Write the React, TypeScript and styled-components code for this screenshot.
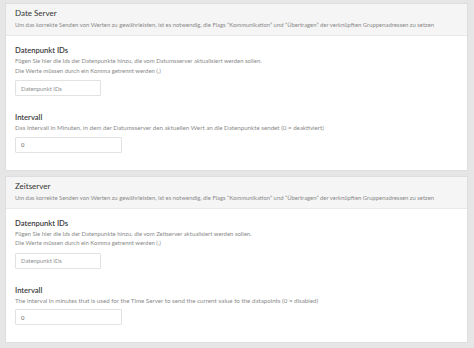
import styled, { createGlobalStyle } from "styled-components";

const GlobalStyle = createGlobalStyle`
    html, body {
        margin: 0;
        padding: 0;
        background-color: #e6e6e6;
        font-family: Lato, "Open Sans", sans-serif;
    }
`;

const Page = styled.div`
    padding: 3px 6px 4px 5px;
    display: flex;
    flex-direction: column;
    gap: 5px;
`;

const Card = styled.section`
    background-color: #ffffff;
    border: 1px solid #dedede;
`;

const CardHeader = styled.header`
    background-color: #f5f5f5;
    border-bottom: 1px solid #e9e9e9;
    padding: 5px 9px 6px;
`;

const Title = styled.h2`
    margin: 0 0 3px;
    font-size: 8px;
    line-height: 9px;
    font-weight: 400;
    color: #333333;
`;

const Subtitle = styled.p`
    margin: 0;
    font-size: 5.9px;
    line-height: 8px;
    color: #8a8a8a;
    white-space: nowrap;
`;

const CardBody = styled.div`
    padding: 9px 9px 17px;
    display: flex;
    flex-direction: column;
    gap: 16px;
`;

const Field = styled.div`
    display: flex;
    flex-direction: column;
    align-items: flex-start;
`;

const Label = styled.label`
    font-size: 7.6px;
    line-height: 10px;
    font-weight: 600;
    color: #3a3a3a;
    margin-bottom: 1px;
`;

const Help = styled.p<{ $size: number }>`
    margin: 0 0 4px;
    font-size: ${(props) => props.$size}px;
    line-height: 9.5px;
    color: #8a8a8a;
    white-space: nowrap;
`;

const Input = styled.input<{ $width: number }>`
    box-sizing: border-box;
    width: ${(props) => props.$width}px;
    height: 16px;
    margin-top: ${(props) => (props.$width > 100 ? 0 : 1)}px;
    padding: 0 5px;
    border: 1px solid #e2e2e2;
    border-radius: 1px;
    background: #ffffff;
    font-family: Lato, "Open Sans", sans-serif;
    font-size: 5.9px;
    color: #666666;
    outline: none;
    &::placeholder {
        color: #8f8f8f;
    }
`;

interface IServer {
    title: string;
    idsHelp: string;
    intervalHelp: string;
}

const servers: IServer[] = [
    {
        title: "Date Server",
        idsHelp: "Fügen Sie hier die Ids der Datenpunkte hinzu, die vom Datumsserver aktualisiert werden sollen.",
        intervalHelp: "Das Intervall in Minuten, in dem der Datumsserver den aktuellen Wert an die Datenpunkte sendet (0 = deaktiviert)",
    },
    {
        title: "Zeitserver",
        idsHelp: "Fügen Sie hier die Ids der Datenpunkte hinzu, die vom Zeitserver aktualisiert werden sollen.",
        intervalHelp: "The interval in minutes that is used for the Time Server to send the current value to the datapoints (0 = disabled)",
    },
];

const flagsText =
    "Um das korrekte Senden von Werten zu gewährleisten, ist es notwendig, die Flags \u201CKommunikation\u201D und \u201CÜbertragen\u201D der verknüpften Gruppenadressen zu setzen";

function App() {
    return (
        <Page>
            <GlobalStyle />
            {servers.map((server) => (
                <Card key={server.title}>
                    <CardHeader>
                        <Title>{server.title}</Title>
                        <Subtitle>{flagsText}</Subtitle>
                    </CardHeader>
                    <CardBody>
                        <Field>
                            <Label>Datenpunkt IDs</Label>
                            <Help $size={5.95}>
                                {server.idsHelp}
                                <br />
                                Die Werte müssen durch ein Komma getrennt werden (,)
                            </Help>
                            <Input $width={86} placeholder="Datenpunkt IDs" />
                        </Field>
                        <Field>
                            <Label>Intervall</Label>
                            <Help $size={6.2}>{server.intervalHelp}</Help>
                            <Input $width={107} defaultValue="0" />
                        </Field>
                    </CardBody>
                </Card>
            ))}
        </Page>
    );
}

export default App;
